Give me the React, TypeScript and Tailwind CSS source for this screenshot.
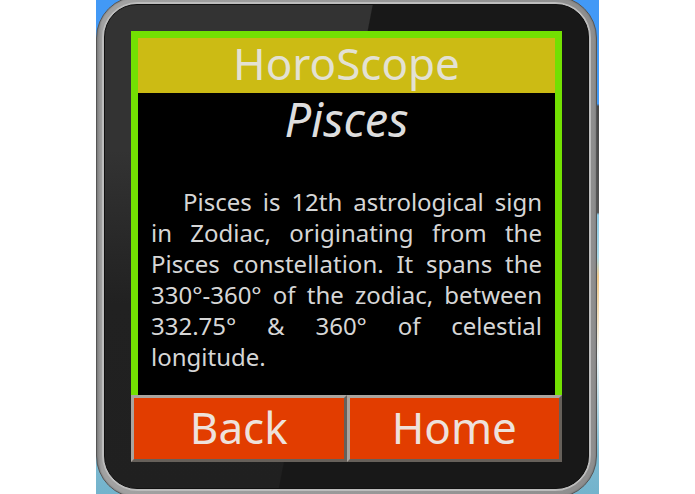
import type { ReactNode } from "react";

function WatchButton({ children }: { children: ReactNode }) {
  return (
    <button
      type="button"
      className="flex h-[67px] flex-1 items-center justify-center border-[3px] border-t-[#aaa49e] border-r-[#66605a] border-b-[#66605a] border-l-[#aaa49e] bg-[#e23d00] pb-1 text-[44px] leading-none text-[#eee2dc]"
    >
      {children}
    </button>
  );
}

function Screen() {
  return (
    <section className="flex h-[431px] flex-col bg-black text-[#dedede]">
      <div className="flex flex-1 flex-col border-x-[7px] border-t-[7px] border-[#73e002]">
        <header className="bg-[#ccbb14] pb-1">
          <h1 className="text-center text-[44px] leading-[51px] text-[#e3e1d3]">HoroScope</h1>
        </header>
        <h2 className="text-center text-[47px] leading-[52px] italic">Pisces</h2>
        <p className="mt-[41px] px-[13px] text-justify indent-8 text-[24px] leading-[31px] text-[#d6d6d6]">
          Pisces is 12th astrological sign in Zodiac, originating from the Pisces constellation. It
          spans the 330°-360° of the zodiac, between 332.75° &amp; 360° of celestial longitude.
        </p>
      </div>
      <nav className="flex" aria-label="Screen actions">
        <WatchButton>Back</WatchButton>
        <WatchButton>Home</WatchButton>
      </nav>
    </section>
  );
}

export default function App() {
  return (
    <main className="flex justify-center bg-white font-['Noto_Sans','Open_Sans',sans-serif]">
      <div className="w-full max-w-[503px] overflow-hidden bg-[linear-gradient(180deg,#4299f6_0%,#4299f6_21%,#484848_21.5%,#555_43%,#8fcbe6_43.5%,#a8d8e8_52%,#efc98a_56%,#f3e2c2_65%,#eef6f8_72%,#7db9d0_92%,#73b3cc_100%)]">
        <div className="-my-1 mr-[2px] rounded-[42px] border border-[#555] bg-[linear-gradient(90deg,#858585_0px,#a2a2a2_5px,#999_50%,#8e8e8e_100%)] px-[5px] pt-[5px] pb-[6px] shadow-[inset_0_0_2px_#666]">
          <div className="rounded-[36px] border-2 border-[#bdbdbd]">
            <div className="rounded-[33px] border border-[#111] bg-[linear-gradient(101deg,transparent_46.3%,#181818_46.5%),linear-gradient(180deg,#333_0%,#333_30%,#212121_62%,#202020_100%)] px-[26px] pt-[26px] pb-[26px]">
              <Screen />
            </div>
          </div>
        </div>
      </div>
    </main>
  );
}
